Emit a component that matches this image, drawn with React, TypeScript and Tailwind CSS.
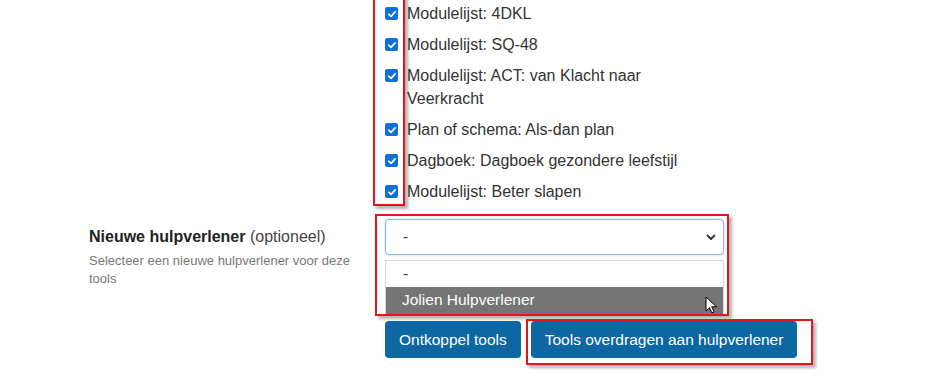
import React from "react";

const tools = [
  "Modulelijst: 4DKL",
  "Modulelijst: SQ-48",
  "Modulelijst: ACT: van Klacht naar Veerkracht",
  "Plan of schema: Als-dan plan",
  "Dagboek: Dagboek gezondere leefstijl",
  "Modulelijst: Beter slapen",
];

const CheckBox = () => (
  <span className="mt-[5px] flex h-[13px] w-[13px] shrink-0 items-center justify-center rounded-[2px] bg-[#1170d6]">
    <svg viewBox="0 0 12 12" className="h-[10px] w-[10px]">
      <path d="M2.2 6.3 4.8 8.8 9.8 3.4" fill="none" stroke="#fff" strokeWidth="2" strokeLinecap="round" strokeLinejoin="round" />
    </svg>
  </span>
);

const App = () => {
  return (
    <div className="relative h-[378px] w-[945px] overflow-hidden bg-white font-['Liberation_Sans',Arial,sans-serif] text-[#333]">
      {/* checkbox list */}
      <div className="relative ml-[385px] pt-[2px]">
        <ul className="flex flex-col gap-[8px]">
          {tools.map((t) => (
            <li key={t} className="flex items-start gap-[9px]">
              <CheckBox />
              <span className="w-[275px] text-[16px] leading-[23px]">{t}</span>
            </li>
          ))}
        </ul>
        {/* annotation box */}
        <div className="absolute -top-[10px] left-[-12px] h-[216px] w-[32px] border-2 border-[#e8141b] shadow-[3px_3px_3px_rgba(0,0,0,0.3)]" />
      </div>

      {/* nieuwe hulpverlener */}
      <div className="mt-[11px] flex items-start">
        <div className="ml-[89px] w-[286px] pt-[12px]">
          <p className="text-[16px] leading-[22px]">
            <span className="font-bold text-[#222]">Nieuwe hulpverlener</span>{" "}
            <span className="text-[#444]">(optioneel)</span>
          </p>
          <p className="mt-[4px] w-[272px] text-[13px] leading-[18px] text-[#777]">
            Selecteer een nieuwe hulpverlener voor deze tools
          </p>
        </div>
        <div className="w-[354px] border-2 border-[#e8141b] pl-[8px] pr-[3px] pt-[3px] shadow-[3px_3px_3px_rgba(0,0,0,0.3)]">
          <div className="flex h-[36px] items-center justify-between rounded-[4px] border border-[#8fbbd3] bg-white pl-[17px] pr-[6px] shadow-[0_0_3px_rgba(102,175,233,0.5)]">
            <span className="text-[15.5px]">-</span>
            <svg viewBox="0 0 12 12" className="h-[12px] w-[12px]">
              <path d="M2.5 4.5 6 8l3.5-3.5" fill="none" stroke="#333" strokeWidth="1.8" strokeLinecap="round" strokeLinejoin="round" />
            </svg>
          </div>
          <div className="mt-[5px] border border-[#d6d6d6] border-b-0">
            <div className="h-[26px] pl-[17px] text-[15.5px] leading-[26px]">-</div>
            <div className="relative h-[27px] bg-[#757575] pl-[16px] text-[15.5px] leading-[26px] text-white">
              Jolien Hulpverlener
              <svg viewBox="0 0 12 18" className="absolute right-[6px] top-[9px] h-[18px] w-[12px]">
                <path d="M1 1v14l3.5-3.4 2.3 5.2 2.2-1-2.3-5h4.8z" fill="#fff" stroke="#000" strokeWidth="1" strokeLinejoin="round" />
              </svg>
            </div>
          </div>
        </div>
      </div>

      {/* actions */}
      <div className="ml-[385px] mt-[3px] flex items-start gap-[5px]">
        <button className="mt-[2px] h-[37px] rounded-[4px] bg-[#0c67a3] px-[14px] text-[15.5px] text-white">
          Ontkoppel tools
        </button>
        <div className="border-2 border-[#e8141b] pb-[5px] pl-[3px] pr-[14px] shadow-[3px_3px_3px_rgba(0,0,0,0.3)]">
          <button className="h-[37px] rounded-[4px] bg-[#0c67a3] px-[14px] text-[15.5px] text-white">
            Tools overdragen aan hulpverlener
          </button>
        </div>
      </div>
    </div>
  );
};

export default App;
